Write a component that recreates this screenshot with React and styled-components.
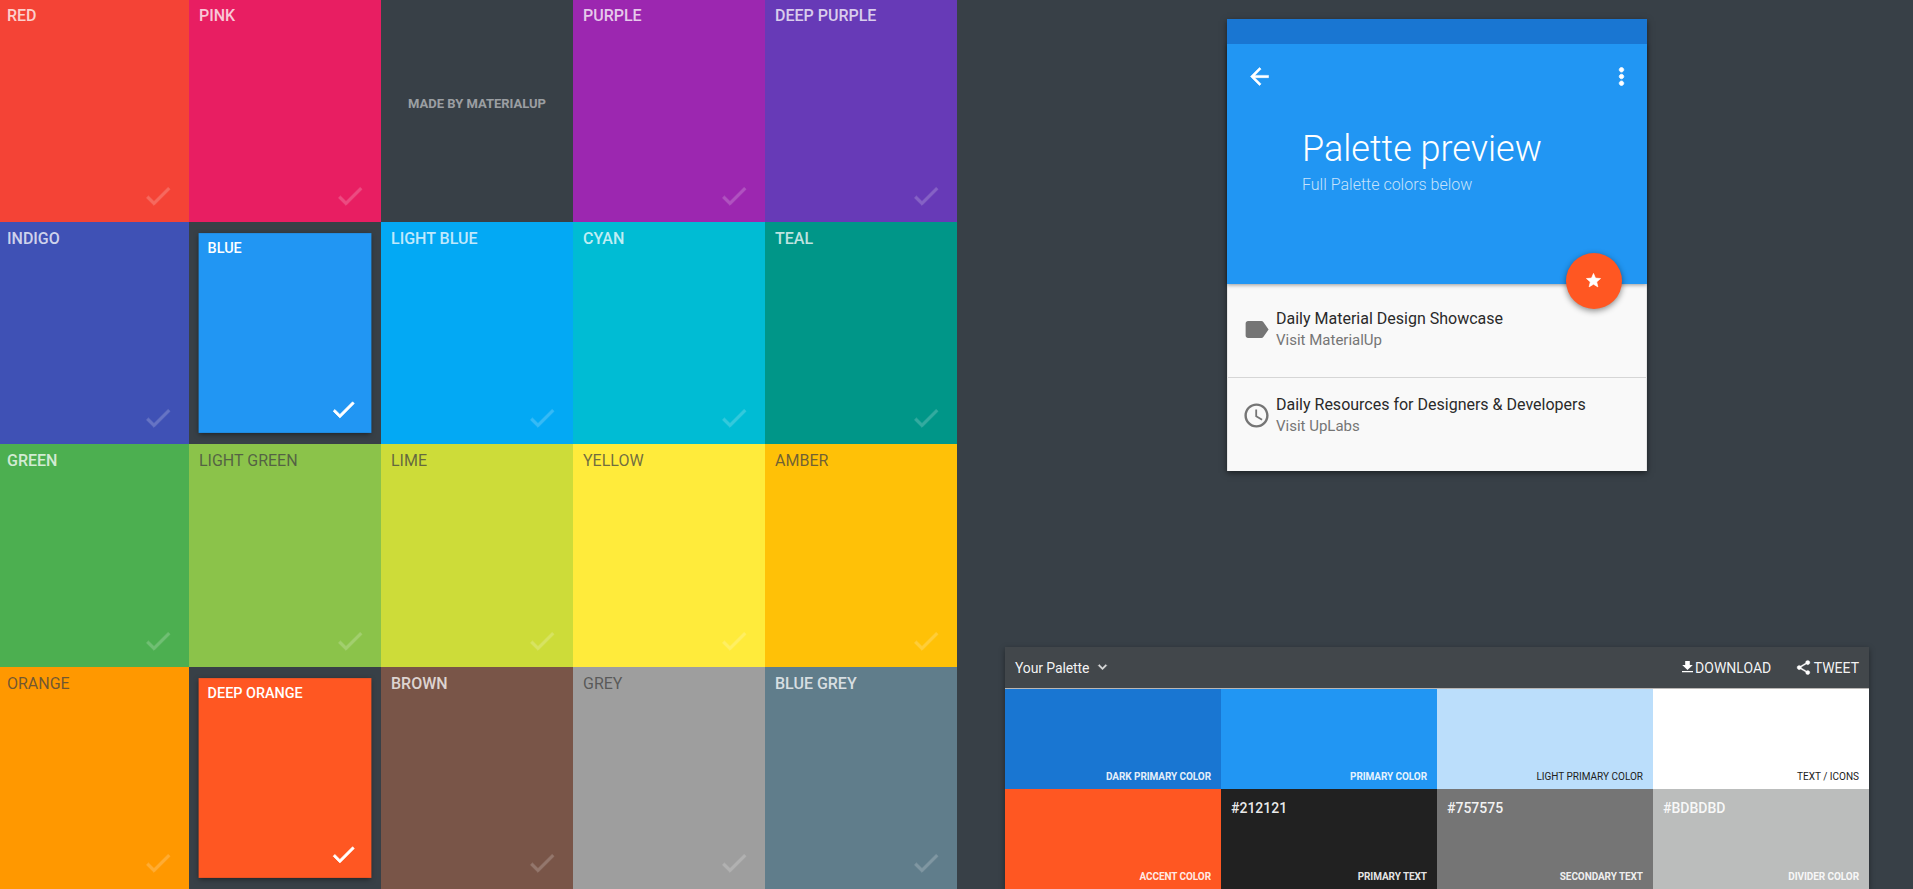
import React from "react";
import styled, { createGlobalStyle, css } from "styled-components";

const GlobalStyle = createGlobalStyle`
  *, *::before, *::after { box-sizing: border-box; }
  html, body { margin: 0; height: 100%; overflow: hidden; }
  body {
    background: #384047;
    font-family: Roboto, "Liberation Sans", sans-serif;
    font-size: 14px;
    color: #fff;
  }
`;

const Page = styled.main`
  display: flex;
  height: 889px;
  width: 1913px;
`;

const Swatches = styled.section`
  flex: none;
  display: grid;
  grid-template-columns: 189px repeat(4, 192px);
  grid-template-rows: 222px 222px 223px 222px;
  width: 957px;
`;

const Swatch = styled.button`
  display: flex;
  flex-direction: column;
  justify-content: space-between;
  align-items: flex-start;
  margin: 0;
  border: 0;
  padding: ${(p) => (p.$top ? 6 : 7)}px 15px 10px ${(p) => (p.$edge ? 7 : 10)}px;
  background: ${(p) => p.$color};
  font: inherit;
  text-align: left;
  ${(p) =>
    p.$selected &&
    css`
      transform: scale(0.9);
      box-shadow: 0 2px 6px rgba(0, 0, 0, 0.5);
    `}
`;

const SwatchName = styled.span`
  font-size: 16px;
  line-height: 20px;
  font-weight: ${(p) => (p.$dark ? 400 : 500)};
  color: ${(p) =>
    p.$selected ? "#fff" : p.$dark ? "rgba(66,66,66,.75)" : "rgba(255,255,255,.75)"};
`;

const Tick = styled.svg`
  align-self: flex-end;
  width: 32px;
  height: 32px;
  fill: #fff;
  stroke: #fff;
  stroke-width: 0.6;
  opacity: ${(p) => (p.$selected ? 1 : 0.2)};
`;

const Credit = styled.div`
  display: flex;
  align-items: center;
  justify-content: center;
  padding-bottom: 15px;
  font-size: 13px;
  font-weight: 700;
  color: rgba(255, 255, 255, 0.5);
`;

const Side = styled.section`
  flex: 1;
  display: flex;
  flex-direction: column;
  justify-content: space-between;
  padding: 19px 44px 0 48px;
`;

const Card = styled.article`
  align-self: center;
  width: 420px;
  height: 452px;
  background: #f9f9f9;
  box-shadow: 0 2px 6px rgba(0, 0, 0, 0.5);
`;

const StatusBar = styled.div`
  position: relative;
  z-index: 1;
  height: 25px;
  background: #1976d2;
`;

const Hero = styled.header`
  position: relative;
  height: 240px;
  padding: 19px 12px 0 19px;
  background: #2196f3;
  box-shadow: 0 1px 4px rgba(0, 0, 0, 0.4);
`;

const HeroBar = styled.div`
  display: flex;
  justify-content: space-between;
`;

const Glyph = styled.svg`
  display: block;
  flex: none;
  width: ${(p) => p.$size}px;
  height: ${(p) => p.$size}px;
  fill: ${(p) => p.$fill || "#fff"};
  stroke: ${(p) => p.$fill || "#fff"};
  stroke-width: ${(p) => p.$weight || 0};
`;

const HeroTitle = styled.h1`
  margin: 35px 0 0 56px;
  font-size: 36px;
  line-height: 48px;
  font-weight: 300;
`;

const HeroSub = styled.p`
  margin: 0 0 0 56px;
  font-size: 16px;
  line-height: 24px;
  font-weight: 300;
  color: #c6e3fc;
`;

const Fab = styled.button`
  position: absolute;
  right: 25px;
  bottom: -25px;
  display: grid;
  place-items: center;
  width: 56px;
  height: 56px;
  padding: 0 1px 1px 0;
  border: 0;
  border-radius: 50%;
  background: #ff5722;
  box-shadow: 0 2px 6px rgba(0, 0, 0, 0.45);
`;

const List = styled.div`
  border: solid #e6e6e6;
  border-width: 0 1px;
  height: 187px;
`;

const Item = styled.a`
  display: flex;
  height: 93px;
  padding: 0 13px 2px 13.5px;
  align-items: center;
  color: #2a2a2a;
  & + & {
    height: 94px;
    padding-bottom: 18px;
    border-top: 1px solid #d6d6d6;
  }
`;

const ItemText = styled.div`
  margin-left: 5.5px;
  margin-top: -1px;
`;

const ItemTitle = styled.div`
  font-size: 16px;
  line-height: 22px;
`;

const ItemSub = styled.div`
  font-size: 15px;
  line-height: 20px;
  color: #757575;
`;

const Palette = styled.section`
  box-shadow: 0 2px 6px rgba(0, 0, 0, 0.4);
`;

const PaletteBar = styled.div`
  display: flex;
  align-items: center;
  height: 42px;
  padding: 0 10px;
  background: #42474b;
  border-bottom: 1px solid #b9b6b4;
  color: rgba(255, 255, 255, 0.95);
`;

const BarTitle = styled.span`
  flex: 1;
  display: flex;
  align-items: center;
  gap: 5px;
  letter-spacing: -0.12px;
`;

const Action = styled.span`
  display: flex;
  align-items: center;
  gap: 2px;
  margin-left: 23.5px;
`;

const DownloadGlyph = styled.svg`
  display: block;
  width: 11px;
  height: 12px;
  margin-bottom: 1px;
  fill: #fff;
`;

const Tones = styled.div`
  display: grid;
  grid-template-columns: repeat(4, 216px);
  grid-auto-rows: 100px;
`;

const Tone = styled.div`
  display: flex;
  flex-direction: column;
  justify-content: space-between;
  padding: 10px 10px 5px;
  background: ${(p) => p.$color};
`;

const Hex = styled.span`
  font-size: 14px;
  line-height: 18px;
  min-height: 18px;
  font-weight: 500;
  color: rgba(255, 255, 255, 0.92);
`;

const Role = styled.span`
  align-self: flex-end;
  font-size: 10px;
  line-height: 14px;
  font-weight: ${(p) => (p.$dark ? 400 : 700)};
  letter-spacing: ${(p) => (p.$dark ? 0 : -0.08)}px;
  color: ${(p) => (p.$dark ? "#212121" : "rgba(255,255,255,.9)")};
`;

const swatches = [
  { name: "RED", color: "#f44336" },
  { name: "PINK", color: "#e81e62" },
  { credit: "MADE BY MATERIALUP" },
  { name: "PURPLE", color: "#9c27b0" },
  { name: "DEEP PURPLE", color: "#673ab7" },
  { name: "INDIGO", color: "#3f51b5" },
  { name: "BLUE", color: "#2196f3", selected: true },
  { name: "LIGHT BLUE", color: "#03a9f4" },
  { name: "CYAN", color: "#00bcd4" },
  { name: "TEAL", color: "#009688" },
  { name: "GREEN", color: "#4caf50" },
  { name: "LIGHT GREEN", color: "#8bc34a", dark: true },
  { name: "LIME", color: "#cddc39", dark: true },
  { name: "YELLOW", color: "#ffeb3b", dark: true },
  { name: "AMBER", color: "#ffc107", dark: true },
  { name: "ORANGE", color: "#ff9800", dark: true },
  { name: "DEEP ORANGE", color: "#ff5722", selected: true },
  { name: "BROWN", color: "#795548" },
  { name: "GREY", color: "#9e9e9e", dark: true },
  { name: "BLUE GREY", color: "#607d8b" },
];

const tones = [
  { role: "DARK PRIMARY COLOR", color: "#1976d2" },
  { role: "PRIMARY COLOR", color: "#2196f3" },
  { role: "LIGHT PRIMARY COLOR", color: "#bbdefb", dark: true },
  { role: "TEXT / ICONS", color: "#ffffff", dark: true },
  { role: "ACCENT COLOR", color: "#ff5722" },
  { role: "PRIMARY TEXT", color: "#212121", hex: "#212121" },
  { role: "SECONDARY TEXT", color: "#757575", hex: "#757575" },
  { role: "DIVIDER COLOR", color: "#bbbdbc", hex: "#BDBDBD" },
];

const paths = {
  check: "M9 16.17L4.83 12l-1.42 1.41L9 19 21 7l-1.41-1.41z",
  back: "M20 11H7.83l5.59-5.59L12 4l-8 8 8 8 1.41-1.41L7.83 13H20v-2z",
  more: "M12 8c1.1 0 2-.9 2-2s-.9-2-2-2-2 .9-2 2 .9 2 2 2zm0 2c-1.1 0-2 .9-2 2s.9 2 2 2 2-.9 2-2-.9-2-2-2zm0 6c-1.1 0-2 .9-2 2s.9 2 2 2 2-.9 2-2-.9-2-2-2z",
  star: "M12 17.27L18.18 21l-1.64-7.03L22 9.24l-7.19-.61L12 2 9.19 8.63 2 9.24l5.46 4.73L5.82 21z",
  label:
    "M17.63 5.84C17.27 5.33 16.67 5 16 5L5 5.01C3.9 5.01 3 5.9 3 7v10c0 1.1.9 1.99 2 1.99L16 19c.67 0 1.27-.33 1.63-.84L22 12l-4.37-6.16z",
  clock:
    "M11.99 2C6.47 2 2 6.48 2 12s4.47 10 9.99 10C17.52 22 22 17.52 22 12S17.52 2 11.99 2zM12 20c-4.42 0-8-3.58-8-8s3.58-8 8-8 8 3.58 8 8-3.58 8-8 8zm.5-13H11v6l5.25 3.15.75-1.23-4.5-2.67z",
  down: "M7.41 7.84L12 12.42l4.59-4.58L18 9.25l-6 6-6-6z",
  share:
    "M18 16.08c-.76 0-1.44.3-1.96.77L8.91 12.7c.05-.23.09-.46.09-.7s-.04-.47-.09-.7l7.05-4.11c.54.5 1.25.81 2.04.81 1.66 0 3-1.34 3-3s-1.34-3-3-3-3 1.34-3 3c0 .24.04.47.09.7L8.04 9.81C7.5 9.31 6.79 9 6 9c-1.66 0-3 1.34-3 3s1.34 3 3 3c.79 0 1.5-.31 2.04-.81l7.12 4.16c-.05.21-.08.43-.08.65 0 1.61 1.31 2.92 2.92 2.92s2.92-1.31 2.92-2.92-1.31-2.92-2.92-2.92z",
};

const Icon = ({ name, size, fill, weight }) => (
  <Glyph viewBox="0 0 24 24" $size={size} $fill={fill} $weight={weight}>
    <path d={paths[name]} />
  </Glyph>
);

export default function App() {
  return (
    <Page>
      <GlobalStyle />
      <Swatches>
        {swatches.map((s, i) =>
          s.credit ? (
            <Credit key={s.credit}>{s.credit}</Credit>
          ) : (
            <Swatch
              key={s.name}
              $color={s.color}
              $selected={s.selected}
              $edge={i % 5 === 0}
              $top={i < 5}
            >
              <SwatchName $dark={s.dark} $selected={s.selected}>
                {s.name}
              </SwatchName>
              <Tick viewBox="0 0 24 24" $selected={s.selected}>
                <path d={paths.check} />
              </Tick>
            </Swatch>
          )
        )}
      </Swatches>
      <Side>
        <Card>
          <StatusBar />
          <Hero>
            <HeroBar>
              <Icon name="back" size={27} weight={0.5} />
              <Icon name="more" size={27} weight={0.7} />
            </HeroBar>
            <HeroTitle>Palette preview</HeroTitle>
            <HeroSub>Full Palette colors below</HeroSub>
            <Fab>
              <Icon name="star" size={17} weight={0.9} />
            </Fab>
          </Hero>
          <List>
            <Item>
              <Icon name="label" size={29} fill="#757575" />
              <ItemText>
                <ItemTitle>Daily Material Design Showcase</ItemTitle>
                <ItemSub>Visit MaterialUp</ItemSub>
              </ItemText>
            </Item>
            <Item>
              <Icon name="clock" size={29} fill="#757575" />
              <ItemText>
                <ItemTitle>Daily Resources for Designers &amp; Developers</ItemTitle>
                <ItemSub>Visit UpLabs</ItemSub>
              </ItemText>
            </Item>
          </List>
        </Card>
        <Palette>
          <PaletteBar>
            <BarTitle>
              Your Palette
              <Icon name="down" size={17} fill="#dcdddd" weight={0.7} />
            </BarTitle>
            <Action>
              <DownloadGlyph viewBox="0 0 11 12">
                <path d="M3.2 0h4.6v4h3L5.5 9 .2 4h3zM0 10h11v1.3H0z" />
              </DownloadGlyph>
              DOWNLOAD
            </Action>
            <Action>
              <Icon name="share" size={17} weight={0.5} />
              TWEET
            </Action>
          </PaletteBar>
          <Tones>
            {tones.map((t) => (
              <Tone key={t.role} $color={t.color}>
                <Hex>{t.hex}</Hex>
                <Role $dark={t.dark}>{t.role}</Role>
              </Tone>
            ))}
          </Tones>
        </Palette>
      </Side>
    </Page>
  );
}
